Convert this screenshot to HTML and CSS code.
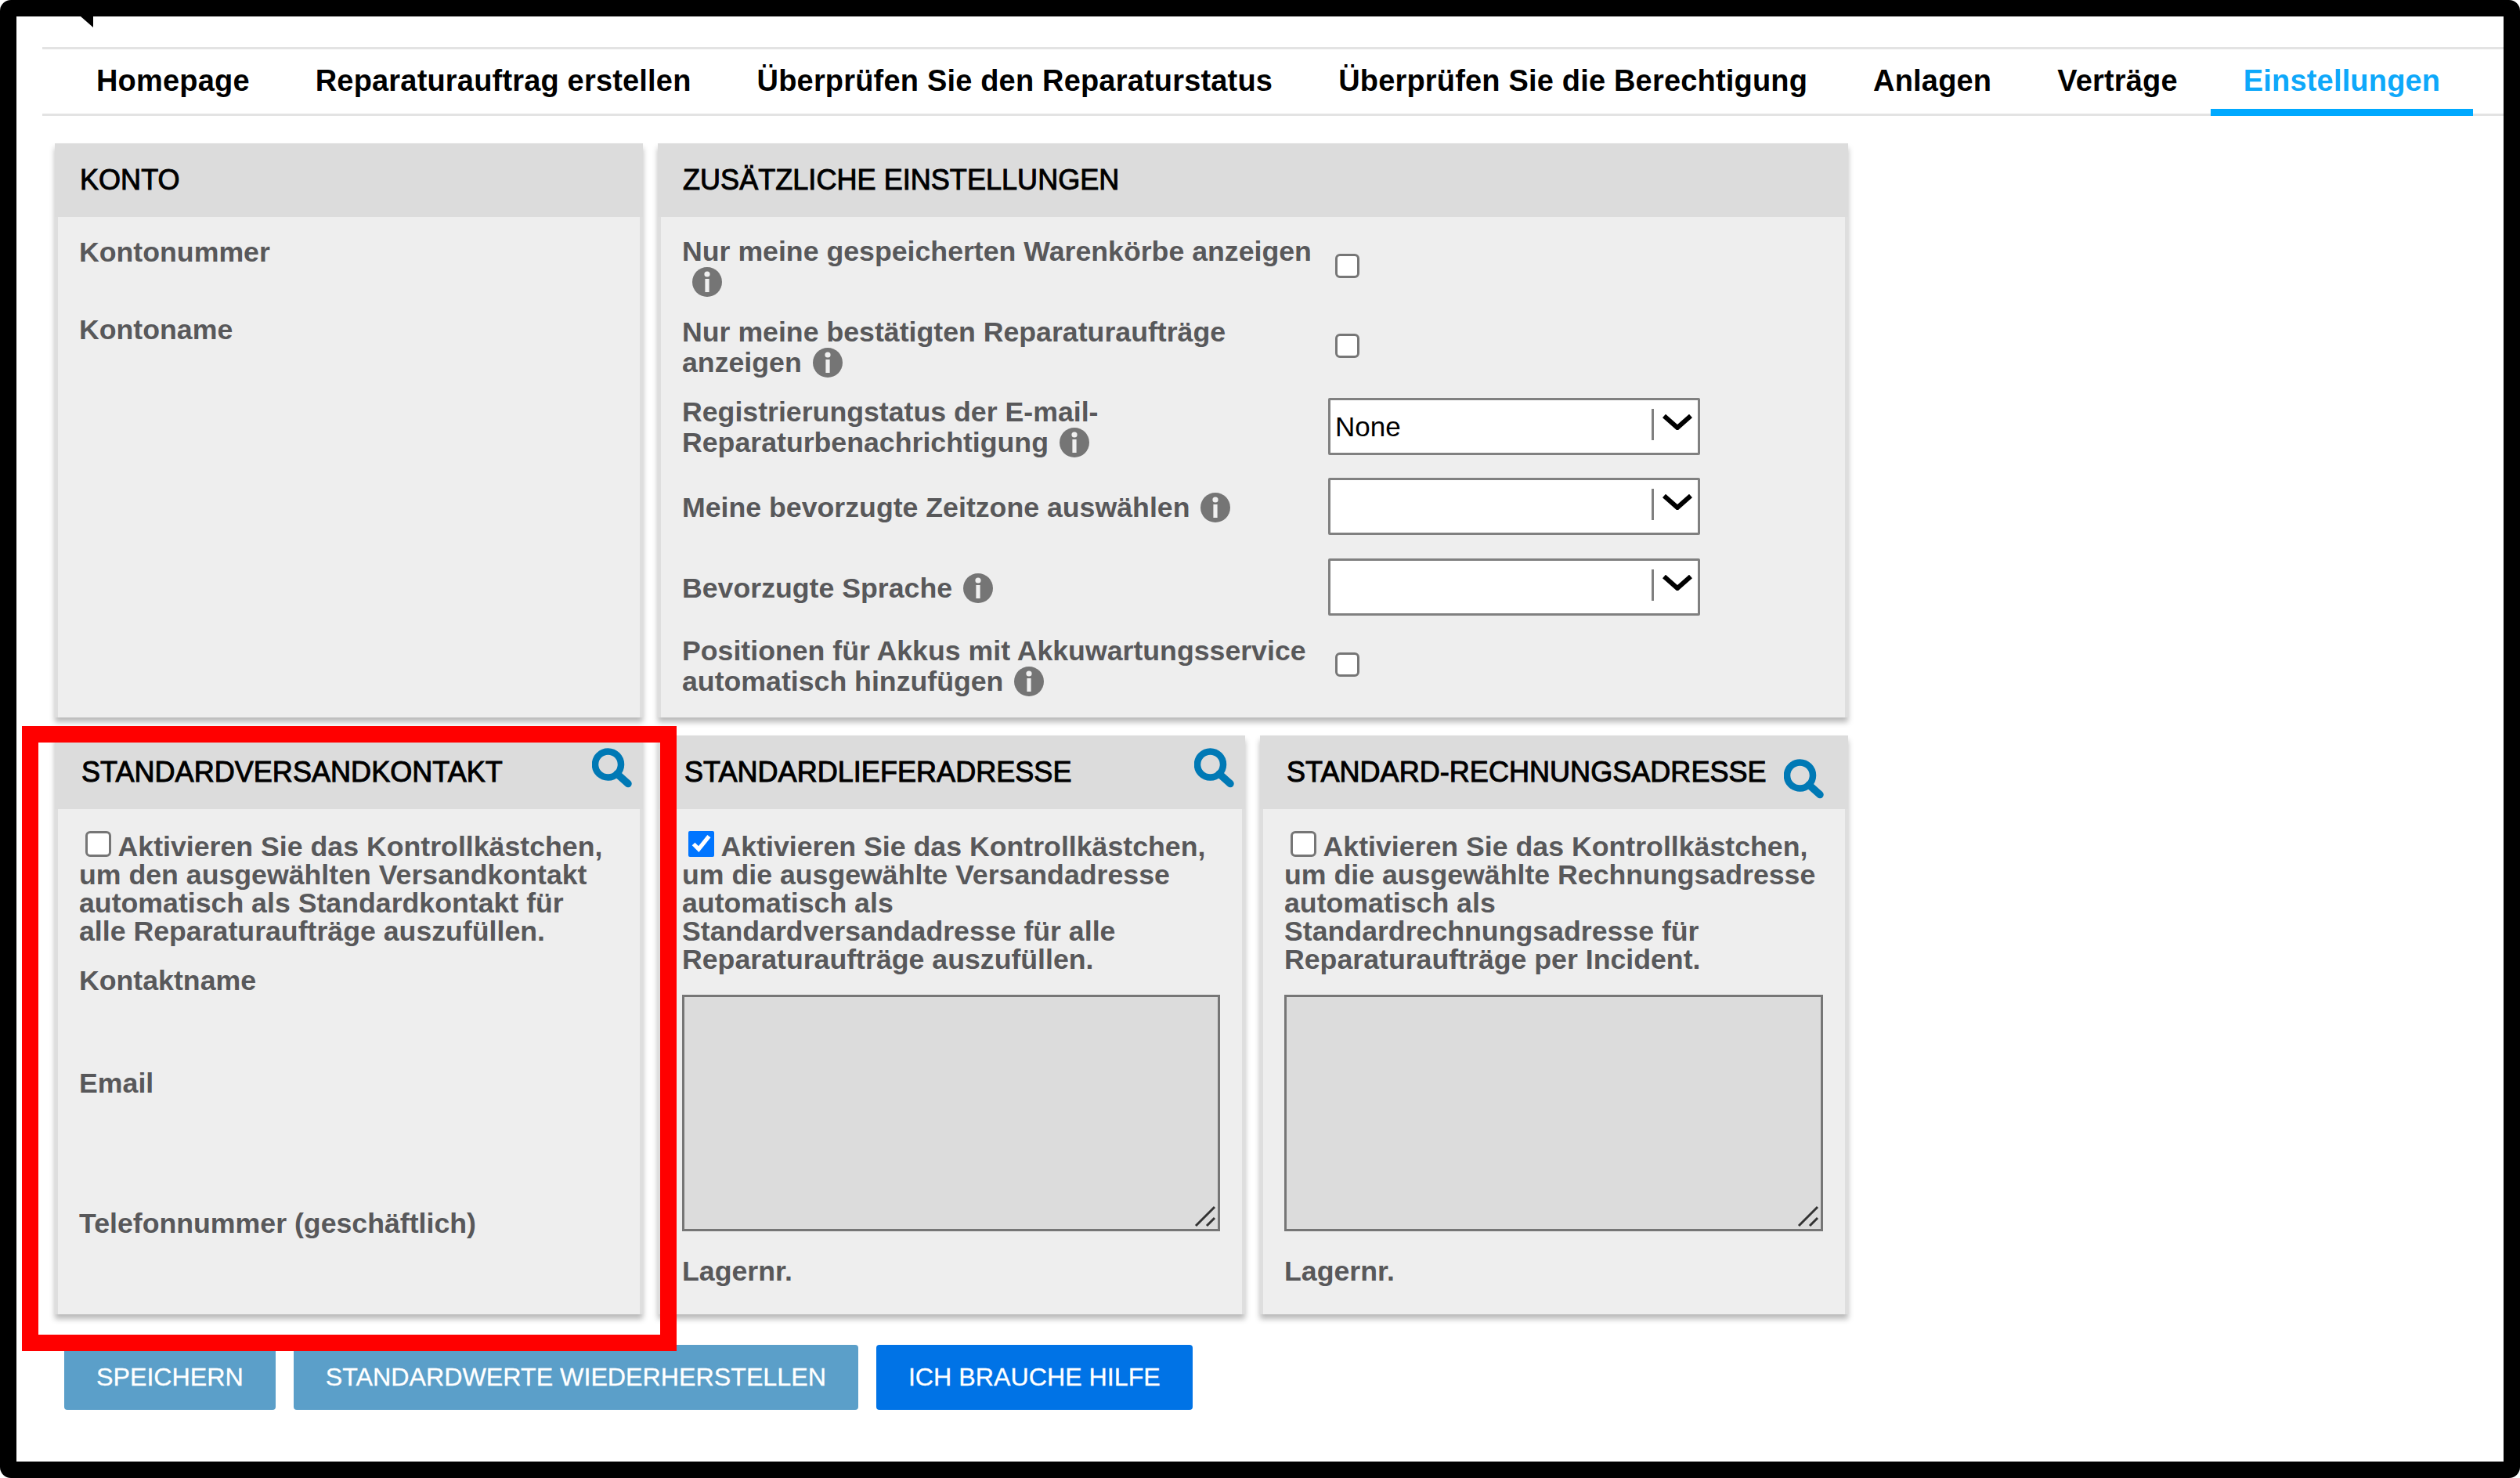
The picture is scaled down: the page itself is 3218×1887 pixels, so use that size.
FILE: index.html
```html
<!DOCTYPE html>
<html lang="de">
<head>
<meta charset="utf-8">
<title>Einstellungen</title>
<link rel="stylesheet" href="styles.css">
</head>
<body>
<svg class="defs" width="0" height="0" aria-hidden="true">
  <symbol id="info" viewBox="0 0 38 38">
    <circle cx="19" cy="19" r="19" fill="#757575"/>
    <circle cx="19" cy="9" r="3.6" fill="#f0f0f0"/>
    <rect x="16.4" y="15" width="5.2" height="17" fill="#f0f0f0"/>
  </symbol>
  <symbol id="search" viewBox="0 0 52 51">
    <circle cx="20.5" cy="21" r="16.5" fill="none" stroke="#0079b5" stroke-width="8.5"/>
    <path d="M32 33 46 45.500" fill="none" stroke="#0079b5" stroke-width="9.500" stroke-linecap="round"/>
  </symbol>
  <symbol id="chev" viewBox="0 0 38 20">
    <path d="M2 2 19 17 36 2" fill="none" stroke="#000" stroke-width="6"/>
  </symbol>
  <symbol id="grip" viewBox="0 0 28 28">
    <path d="M2 26 26 2M16 26 26 16" fill="none" stroke="#333" stroke-width="3"/>
  </symbol>
</svg>
<div class="frame">
  <div class="notch"></div>
  <nav class="tabs">
    <a class="tab">Homepage</a>
    <a class="tab">Reparaturauftrag erstellen</a>
    <a class="tab">Überprüfen Sie den Reparaturstatus</a>
    <a class="tab">Überprüfen Sie die Berechtigung</a>
    <a class="tab">Anlagen</a>
    <a class="tab">Verträge</a>
    <a class="tab tab-active">Einstellungen</a>
  </nav>
  <main class="grid">
    <section class="panel">
      <header class="panel-head"><h2 class="title">KONTO</h2></header>
      <div class="panel-body body-konto">
        <div class="label field-konto">Kontonummer</div>
        <div class="label">Kontoname</div>
      </div>
    </section>
    <section class="panel panel-wide">
      <header class="panel-head"><h2 class="title">ZUSÄTZLICHE EINSTELLUNGEN</h2></header>
      <div class="panel-body body-settings">
        <div class="row">
          <div class="rowlabel">Nur meine gespeicherten Warenkörbe anzeigen<br><svg class="info info-first"><use href="#info"/></svg></div>
          <input class="check check-row" type="checkbox">
        </div>
        <div class="row">
          <div class="rowlabel">Nur meine bestätigten Reparaturaufträge<br>anzeigen <svg class="info"><use href="#info"/></svg></div>
          <input class="check check-row" type="checkbox">
        </div>
        <div class="row">
          <div class="rowlabel">Registrierungstatus der E-mail-<br>Reparaturbenachrichtigung <svg class="info"><use href="#info"/></svg></div>
          <div class="select"><span class="select-value">None</span><span class="select-sep"></span><svg class="chev"><use href="#chev"/></svg></div>
        </div>
        <div class="row">
          <div class="rowlabel">Meine bevorzugte Zeitzone auswählen <svg class="info"><use href="#info"/></svg></div>
          <div class="select"><span class="select-value"></span><span class="select-sep"></span><svg class="chev"><use href="#chev"/></svg></div>
        </div>
        <div class="row">
          <div class="rowlabel">Bevorzugte Sprache <svg class="info"><use href="#info"/></svg></div>
          <div class="select"><span class="select-value"></span><span class="select-sep"></span><svg class="chev"><use href="#chev"/></svg></div>
        </div>
        <div class="row row-last">
          <div class="rowlabel">Positionen für Akkus mit Akkuwartungsservice<br>automatisch hinzufügen <svg class="info"><use href="#info"/></svg></div>
          <input class="check check-row" type="checkbox">
        </div>
      </div>
    </section>
    <section class="panel">
      <header class="panel-head panel-head-low"><h2 class="title">STANDARDVERSANDKONTAKT</h2><svg class="search"><use href="#search"/></svg></header>
      <div class="panel-body body-addr">
        <div class="label para"><input class="check check-para" type="checkbox"> Aktivieren Sie das Kontrollkästchen,<br>um den ausgewählten Versandkontakt<br>automatisch als Standardkontakt für<br>alle Reparaturaufträge auszufüllen.</div>
        <div class="label contact-name">Kontaktname</div>
        <div class="label contact-mail">Email</div>
        <div class="label contact-phone">Telefonnummer (geschäftlich)</div>
      </div>
    </section>
    <section class="panel">
      <header class="panel-head panel-head-low"><h2 class="title">STANDARDLIEFERADRESSE</h2><svg class="search"><use href="#search"/></svg></header>
      <div class="panel-body body-addr">
        <div class="label para"><input class="check check-para" type="checkbox" checked> Aktivieren Sie das Kontrollkästchen,<br>um die ausgewählte Versandadresse<br>automatisch als<br>Standardversandadresse für alle<br>Reparaturaufträge auszufüllen.</div>
        <div class="area"><textarea class="area-input"></textarea><svg class="grip"><use href="#grip"/></svg></div>
        <div class="label store">Lagernr.</div>
      </div>
    </section>
    <section class="panel">
      <header class="panel-head panel-head-low panel-head-bill"><h2 class="title">STANDARD-RECHNUNGSADRESSE</h2><svg class="search search-low"><use href="#search"/></svg></header>
      <div class="panel-body body-addr">
        <div class="label para"><input class="check check-para" type="checkbox"> Aktivieren Sie das Kontrollkästchen,<br>um die ausgewählte Rechnungsadresse<br>automatisch als<br>Standardrechnungsadresse für<br>Reparaturaufträge per Incident.</div>
        <div class="area"><textarea class="area-input"></textarea><svg class="grip"><use href="#grip"/></svg></div>
        <div class="label store">Lagernr.</div>
      </div>
    </section>
  </main>
  <div class="actions">
    <button class="btn" type="button">SPEICHERN</button>
    <button class="btn" type="button">STANDARDWERTE WIEDERHERSTELLEN</button>
    <button class="btn btn-primary" type="button">ICH BRAUCHE HILFE</button>
  </div>
  <div class="callout"></div>
</div>
</body>
</html>
```
FILE: styles.css
```css
* { box-sizing: border-box; }
html, body { margin: 0; padding: 0; background: #fff; }
body { font-family: "Liberation Sans", Arial, sans-serif; }
.defs { position: absolute; }

.frame {
  position: relative;
  width: 3218px;
  height: 1887px;
  border: 21px solid #000;
  border-radius: 14px;
  background: #fff;
  padding-top: 39px;
  overflow: hidden;
}
.notch {
  position: absolute;
  left: 82px;
  top: 0;
  width: 16px;
  height: 14px;
  background: #000;
  clip-path: polygon(0 0, 100% 0, 100% 100%);
}

.tabs {
  display: flex;
  height: 88px;
  margin-left: 33px;
  padding-left: 27px;
  border-top: 3px solid #e3e3e3;
  border-bottom: 3px solid #e3e3e3;
}
.tab {
  display: block;
  padding: 0 42px;
  height: 85px;
  line-height: 81px;
  font-size: 38px;
  letter-spacing: .18px;
  font-weight: 700;
  color: #000;
  white-space: nowrap;
}
.tab-active {
  color: #0ea8fa;
  border-bottom: 9px solid #00a9ff;
}

.grid {
  display: grid;
  grid-template-columns: 751px 750px 751px;
  grid-template-rows: 733px 739px;
  column-gap: 19px;
  row-gap: 23px;
  margin: 35px 0 0 49px;
  width: 2291px;
}
.panel {
  display: flex;
  flex-direction: column;
  background: #eee;
  border-left: 4px solid #dedede;
  border-right: 4px solid #dedede;
  box-shadow: 0 6px 7px rgba(0, 0, 0, .28);
}
.panel-wide { grid-column: span 2; }
.panel-head {
  display: flex;
  align-items: center;
  justify-content: space-between;
  flex: 0 0 94px;
  margin: 0 -4px;
  padding: 0 13px 0 32px;
  background: #dcdcdc;
}
.panel-head-low { padding-left: 34px; }
.panel-head-bill { padding-right: 30px; }
.title {
  margin: 0;
  font-size: 36px;
  font-weight: 400;
  letter-spacing: .05px;
  color: #000;
  -webkit-text-stroke: 1px #000;
  white-space: nowrap;
}
.search { width: 52px; height: 51px; margin-bottom: 11px; }
.search-low { margin-bottom: 0; margin-top: 16px; }

.panel-body { flex: 1; padding: 0 28px 0 27px; }
.label, .rowlabel {
  font-size: 35.7px;
  font-weight: 700;
  line-height: 36px;
  color: #58585a;
}
.body-konto { padding-top: 27px; }
.field-konto { margin-bottom: 63px; }

.body-settings { padding-top: 11px; }
.row {
  display: flex;
  align-items: center;
  height: 102.5px;
}
.row-last { height: 96px; }
.rowlabel {
  flex: 0 0 825px;
  padding-top: 4px;
  line-height: 39px;
  white-space: nowrap;
}
.info { width: 38px; height: 38px; margin-left: 4px; vertical-align: -7px; }
.info-first { margin-left: 13px; }
.check { margin: 0; accent-color: #0075ff; }
.check:not(:checked) {
  appearance: none;
  background: #fff;
  border: 3px solid #767676;
  border-radius: 6px;
}
.check-row { width: 31px; height: 31px; margin-left: 9px; }
.check-para { width: 33px; height: 33px; margin: 0 0 0 8px; vertical-align: -1px; }

.select {
  display: flex;
  align-items: flex-start;
  width: 475px;
  height: 73px;
  background: #fff;
  border: 3px solid #808080;
  border-radius: 2px;
  color: #000;
  font-size: 35px;
}
.select-value { flex: 1; padding: 16px 0 0 6px; line-height: 36px; }
.select-sep { width: 3px; height: 40px; margin-top: 11px; background: #808080; }
.chev { width: 38px; height: 20px; margin: 18px 7px 0 11px; }

.body-addr { padding-top: 28px; }
.para { white-space: nowrap; }
.contact-name { margin-top: 27px; }
.contact-mail { margin-top: 95px; }
.contact-phone { margin-top: 143px; }
.area {
  position: relative;
  height: 302px;
  margin-top: 27px;
}
.area-input {
  display: block;
  width: 100%;
  height: 100%;
  margin: 0;
  background: #dcdcdc;
  border: 3px solid #767676;
  resize: none;
}
.grip { position: absolute; right: 5px; bottom: 5px; width: 28px; height: 28px; }
.store { margin-top: 33px; }

.actions {
  display: flex;
  gap: 23px;
  margin: 39px 0 0 61px;
}
.btn {
  height: 83px;
  padding: 0 41px;
  border: 0;
  border-radius: 4px;
  background: #5b9fc9;
  color: #fff;
  font-family: "Liberation Sans", Arial, sans-serif;
  font-size: 32.2px;
  -webkit-text-stroke: .3px #fff;
  white-space: nowrap;
}
.btn-primary { background: #0073e6; }

.callout {
  position: absolute;
  left: 7px;
  top: 906px;
  width: 836px;
  height: 798px;
  border: 21px solid #f00;
  pointer-events: none;
}
```
